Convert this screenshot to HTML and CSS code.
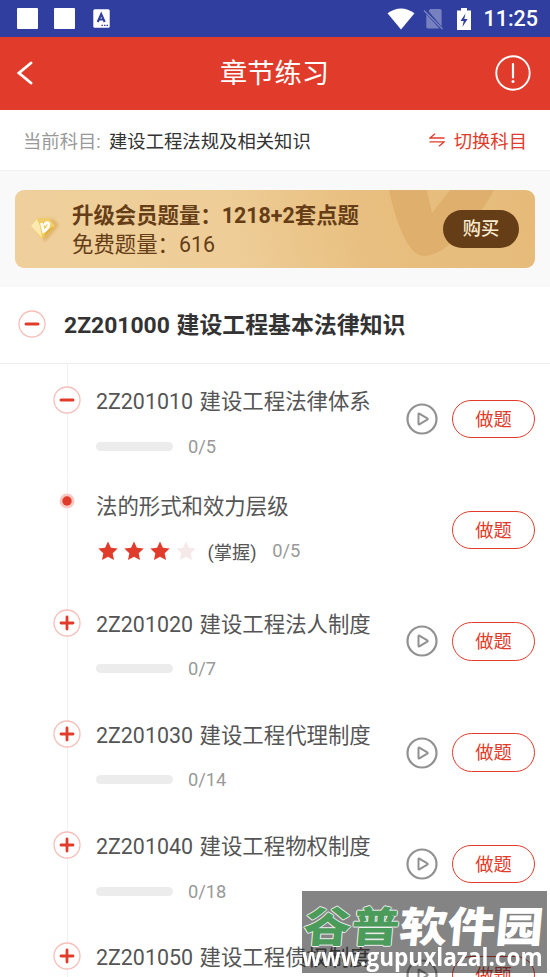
FILE: index.html
```html
<!DOCTYPE html>
<html lang="zh-CN">
<head>
<meta charset="utf-8">
<title>章节练习</title>
<link rel="stylesheet" href="styles.css">
</head>
<body>
<svg width="0" height="0" class="defs">
  <defs>
    <symbol id="minus" viewBox="0 0 28 28"><circle cx="14" cy="14" r="13" fill="#fff" stroke="#f6bfb9" stroke-width="1.3"/><path d="M8 14h12" stroke="#e13c2b" stroke-width="3" stroke-linecap="round"/></symbol>
    <symbol id="plus" viewBox="0 0 28 28"><circle cx="14" cy="14" r="13" fill="#fff" stroke="#f6bfb9" stroke-width="1.3"/><path d="M8 14h12M14 8v12" stroke="#e13c2b" stroke-width="2.8" stroke-linecap="round"/></symbol>
    <symbol id="dot" viewBox="0 0 28 28"><circle cx="14" cy="14" r="7.5" fill="#f9c9c4"/><circle cx="14" cy="14" r="4.7" fill="#e13c2b"/></symbol>
    <symbol id="play" viewBox="0 0 32 32"><circle cx="16" cy="16" r="14.5" fill="none" stroke="#919191" stroke-width="2.2"/><path d="M12.500 11.200v9.600q0 .9.8.5l8-4.700q.9-.6 0-1.200l-8-4.700q-.8-.4-.8.5z" fill="none" stroke="#919191" stroke-width="2" stroke-linejoin="round"/></symbol>
    <symbol id="star" viewBox="0 0 20 20"><path d="M10 .5l2.900 6.300 6.800.8-5 4.700 1.300 6.800-6-3.400-6 3.400 1.300-6.800-5-4.700 6.800-.8z" fill="currentColor"/></symbol>
  </defs>
</svg>
<div class="screen">
  <div class="status">
    <div class="status-left"><i class="block"></i><i class="block"></i>
      <svg class="kb" viewBox="0 0 17 19"><rect x=".3" y=".3" width="16.400" height="18.400" rx="1.500" fill="#fff"/><path d="M4.700 13 L8.200 5 L11.700 13 M6 10.500h4.400" fill="none" stroke="#303f9f" stroke-width="2.100"/><path d="M8.500 16.300h1.500m1 0h1.500m1 0h1.500" stroke="#303f9f" stroke-width="1.200"/></svg>
    </div>
    <div class="status-right">
      <svg class="wifi" viewBox="0 0 28 22"><path d="M.5 5.200Q14-4.200 27.500 5.200L14 21.500z" fill="#fff"/></svg>
      <svg class="sim" viewBox="0 0 21 22"><path d="M3.300 6.200L16.500 20.500H5q-1.700 0-1.700-1.600zM7.300 1H17q1.600 0 1.600 1.600v15.800L5.400 3z" fill="#7781c0"/><path d="M1 2.500l18.500 18.500" stroke="#7781c0" stroke-width="1.600"/></svg>
      <svg class="battery" viewBox="0 0 14 22"><path d="M4 0h6v2.500h4V22H0V2.500h4z" fill="#fff"/><path d="M8.500 5.500L3.500 13h3.200l-1.300 6 5.200-8H7.300z" fill="#303f9f"/></svg>
      <span class="clock">11:25</span>
    </div>
  </div>
  <header class="bar">
    <svg class="back" viewBox="0 0 16 24"><path d="M14 2L2 12l12 10" fill="none" stroke="#fff" stroke-width="2.800" stroke-linecap="round"/></svg>
    <h1>章节练习</h1>
    <svg class="info" viewBox="0 0 36 36"><circle cx="18" cy="18" r="16.700" fill="none" stroke="#fff" stroke-width="1.900"/><path d="M18 9v13.500" stroke="#fff" stroke-width="2.200" stroke-linecap="round"/><circle cx="18" cy="26.500" r="1.500" fill="#fff"/></svg>
  </header>
  <div class="subject">
    <span class="label">当前科目:</span><span class="name">建设工程法规及相关知识</span>
    <svg class="swap" viewBox="0 0 16 14"><path d="M6 .7L1 5h14.500M.5 8.900H15l-5 4.400" fill="none" stroke="#e13c2b" stroke-width="1.300"/></svg>
    <span class="switch">切换科目</span>
  </div>
  <div class="promo-wrap">
    <div class="promo">
      <svg class="swoosh" viewBox="0 0 110 78" preserveAspectRatio="none"><path d="M0 0C6 28 18 66 35 66C58 66 90 28 105 0H61L43 23L38 0z" fill="#dfb06d"/></svg>
      <svg class="gem" viewBox="0 0 30 28"><defs><filter id="soft" x="-30%" y="-30%" width="160%" height="160%"><feGaussianBlur stdDeviation="1.800"/></filter></defs><path d="M5 9l5-5h13l6 6-14 17z" fill="#d3a04c" opacity=".6" filter="url(#soft)"/><path d="M1 11l6-7q7-2 13 0l5 7-11 12q-2 1-4-1z" fill="#f3cd5f"/><path d="M1 11l6-7 3 7 2 12z" fill="#fbe9b0"/><path d="M7 4q7-2 13 0l-3 4h-7z" fill="#f0cc6a"/><path d="M17 15l8-4-12 12z" fill="#e0ac3c"/><path d="M11.500 8l2 8.500q5-2.500 5.500-7.500-1.500-2.500-3.500-.5l-1 2" fill="none" stroke="#fff" stroke-width="2.700"/></svg>
      <div class="promo-text"><b>升级会员题量：1218+2套点题</b><span>免费题量：616</span></div>
      <span class="buy">购买</span>
    </div>
  </div>
  <div class="chapter"><svg class="node"><use href="#minus"/></svg><h2>2Z201000 建设工程基本法律知识</h2></div>
  <div class="list">
    <div class="row"><div class="rail"><svg class="node"><use href="#minus"/></svg></div><div class="body"><div class="title">2Z201010 建设工程法律体系</div><div class="meta"><i class="track"></i><span>0/5</span></div></div><svg class="play"><use href="#play"/></svg><span class="do">做题</span></div>
    <div class="row leaf"><div class="rail"><svg class="node"><use href="#dot"/></svg></div><div class="body"><div class="title">法的形式和效力层级</div><div class="meta"><div class="stars"><svg><use href="#star"/></svg><svg><use href="#star"/></svg><svg><use href="#star"/></svg><svg class="off"><use href="#star"/></svg></div><em>(掌握)</em><span>0/5</span></div></div><span class="do">做题</span></div>
    <div class="row"><div class="rail"><svg class="node"><use href="#plus"/></svg></div><div class="body"><div class="title">2Z201020 建设工程法人制度</div><div class="meta"><i class="track"></i><span>0/7</span></div></div><svg class="play"><use href="#play"/></svg><span class="do">做题</span></div>
    <div class="row"><div class="rail"><svg class="node"><use href="#plus"/></svg></div><div class="body"><div class="title">2Z201030 建设工程代理制度</div><div class="meta"><i class="track"></i><span>0/14</span></div></div><svg class="play"><use href="#play"/></svg><span class="do">做题</span></div>
    <div class="row"><div class="rail"><svg class="node"><use href="#plus"/></svg></div><div class="body"><div class="title">2Z201040 建设工程物权制度</div><div class="meta"><i class="track"></i><span>0/18</span></div></div><svg class="play"><use href="#play"/></svg><span class="do">做题</span></div>
    <div class="row"><div class="rail"><svg class="node"><use href="#plus"/></svg></div><div class="body"><div class="title">2Z201050 建设工程债权制度</div></div><svg class="play"><use href="#play"/></svg><span class="do">做题</span></div>
  </div>
  <div class="mark"><div class="mark-name"><span>谷普</span>软件园</div><div class="mark-url">www.gupuxlazal.com</div></div>
</div>
</body>
</html>
```
FILE: styles.css
```css
* { box-sizing: border-box; margin: 0; padding: 0; }
body { font-family: Roboto, "Noto Sans CJK SC", sans-serif; background: #fff; overflow: hidden; }
svg { display: block; flex: none; }
i, em { font-style: normal; }
.defs { position: absolute; }
.screen { position: relative; width: 550px; height: 977px; overflow: hidden; white-space: nowrap; }

.status { height: 37px; background: #303f9f; display: flex; justify-content: space-between; padding: 0 12px 0 17px; }
.status-left, .status-right { display: flex; align-items: center; }
.block { width: 21px; height: 21px; background: #fff; border-radius: 1px; margin-right: 16px; }
.kb { width: 17px; height: 19px; margin-left: 2px; }
.wifi { width: 28px; height: 22px; }
.sim { width: 21px; height: 22px; margin-left: 8px; }
.battery { width: 14px; height: 22px; margin-left: 13px; }
.clock { font-size: 21.5px; font-weight: 500; color: #fff; margin-left: 12px; line-height: 38px; }

.bar { height: 73px; background: #e13c2b; display: flex; align-items: center; justify-content: space-between; padding: 0 19px 1px 17px; }
.back { width: 16px; height: 24px; margin-right: 20px; }
.bar h1 { font-size: 27.3px; font-weight: 400; color: #fff; line-height: 40px; padding: 2px 0 0 1px; }
.info { width: 36px; height: 36px; }

.subject { height: 60px; display: flex; align-items: center; padding: 0 23px; font-size: 18.35px; color: #333; }
.label { color: #999; width: 86px; }
.name { flex: 1; }
.swap { width: 16px; height: 14px; margin-right: 9px; }
.switch { color: #e13c2b; }

.promo-wrap { height: 117px; background: #f9f9f9; border-top: 1px solid #f2f2f2; padding: 19px 15px 0; }
.promo { position: relative; height: 78px; border-radius: 9px; overflow: hidden; display: flex; align-items: center; background: linear-gradient(75deg, #efd09c 0%, #eecd97 42%, #e8bf80 66%, #e6bb7a 100%); color: #653d17; padding: 0 16px 0 15px; }
.swoosh { position: absolute; left: 374px; top: 0; width: 110px; height: 78px; }
.gem { width: 30px; height: 28px; }
.promo-text { flex: 1; margin-left: 12px; padding-top: 1px; font-size: 21.4px; line-height: 29px; display: flex; flex-direction: column; }
.buy { position: relative; width: 76px; height: 38px; border-radius: 19px; background: #653d17; color: #fcecd0; font-size: 18.3px; font-weight: 500; line-height: 38px; text-align: center; }

.chapter { height: 77px; border-bottom: 1px solid #ececec; display: flex; align-items: center; padding: 0 0 2px 18px; }
.node { width: 28px; height: 28px; }
.chapter h2 { font-size: 22.9px; font-weight: 700; color: #333; margin-left: 18px; padding-top: 3px; line-height: 32px; word-spacing: 1px; }

.row { display: flex; align-items: center; height: 111.2px; padding-right: 15px; }
.list { margin-top: -0.6px; }
.rail { align-self: stretch; width: 28px; margin-left: 53px; padding-top: 23px; background: linear-gradient(#f0f0f0, #f0f0f0) center / 1px 100% no-repeat; }
.body { flex: 1; align-self: stretch; margin-left: 15px; padding-top: 23px; }
.title { font-size: 21.4px; line-height: 32px; color: #555; word-spacing: 1.3px; }
.meta { display: flex; align-items: center; height: 26px; margin-top: 15px; font-size: 18.3px; color: #999; }
.track { width: 77px; height: 9px; border-radius: 5px; background: #ececec; margin-right: 15px; }
.play { width: 32px; height: 32px; margin-right: 14.5px; }
.do { width: 83px; height: 38.5px; border: 1.5px solid #e13c2b; border-radius: 20px; color: #e13c2b; font-size: 18.3px; line-height: 37.5px; text-align: center; }
.leaf .rail { padding-top: 12.5px; }
.leaf .body { padding-top: 16px; }
.stars { display: flex; gap: 6px; color: #e13c2b; margin-left: 1.5px; }
.stars svg { width: 20px; height: 20px; }
.stars .off { color: #f6e9e9; }
.meta em { color: #555; margin: 0 15.5px 0 12px; }

.mark { position: absolute; left: 302px; top: 891px; width: 245px; height: 82px; background: rgba(20, 20, 20, .52); color: #fff; }
.mark-name { height: 56px; font: 900 48px/66px "Noto Sans CJK SC", sans-serif; margin-left: 2px; transform: skewX(-5deg) scaleY(.87); transform-origin: 50% 30px; }
.mark-name span { color: #4b9c5b; text-shadow: 1px 0 #eee, -1px 0 #eee, 0 1px #eee, 0 -1px #eee; }
.mark-url { font: 700 22.6px/26px "Open Sans", sans-serif; margin-top: -3px; transform: scaleY(1.1); }
```
